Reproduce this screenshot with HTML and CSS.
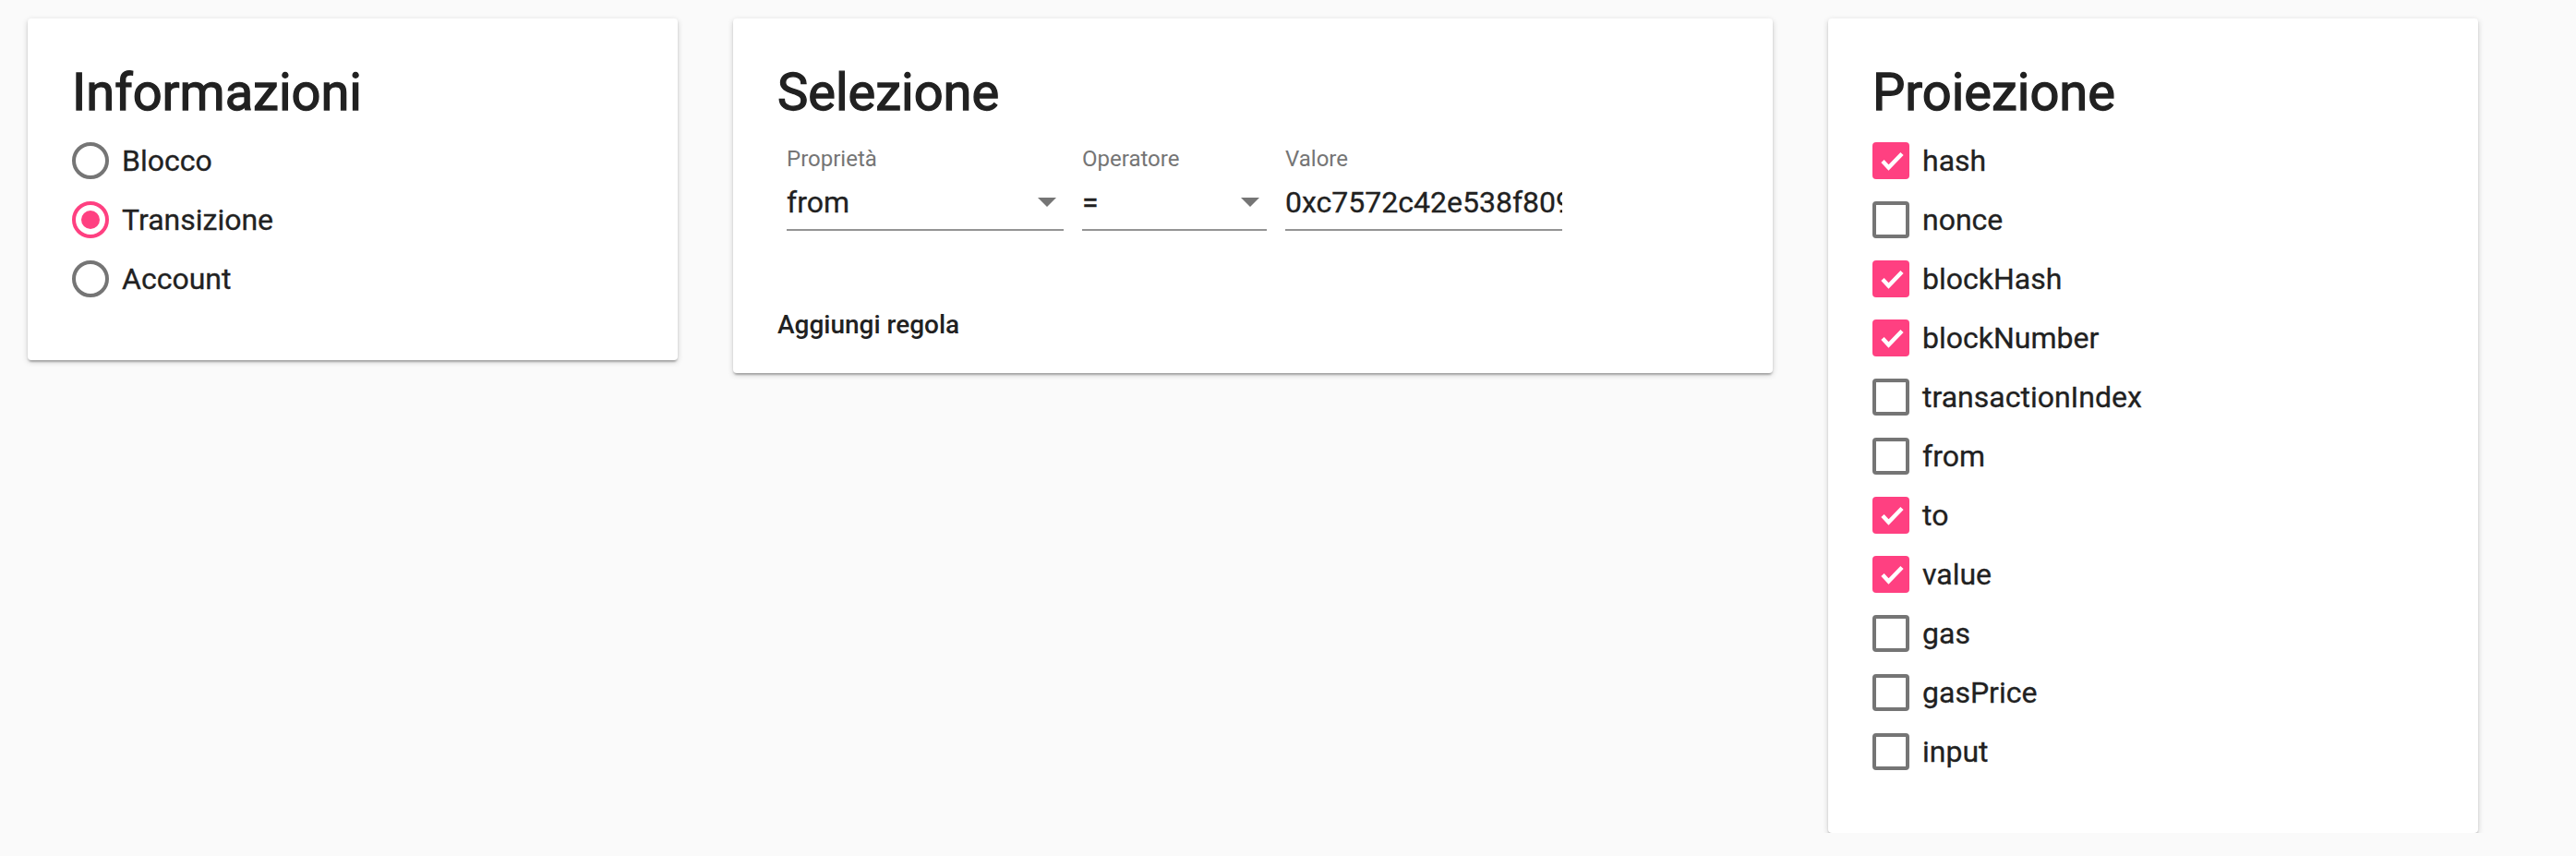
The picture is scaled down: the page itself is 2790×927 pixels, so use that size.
FILE: index.html
```html
<!DOCTYPE html>
<html lang="it">
<head>
<meta charset="utf-8">
<title>Query</title>
<link rel="stylesheet" href="styles.css">
</head>
<body>
<div class="cards">
  <section class="card card-info">
    <h2 class="card-title">Informazioni</h2>
    <ul class="options">
      <li class="option"><span class="radio"></span><span class="option-label">Blocco</span></li>
      <li class="option"><span class="radio radio-checked"><span class="radio-dot"></span></span><span class="option-label">Transizione</span></li>
      <li class="option"><span class="radio"></span><span class="option-label">Account</span></li>
    </ul>
  </section>

  <section class="card card-selection">
    <h2 class="card-title">Selezione</h2>
    <div class="fields">
      <div class="field field-wide">
        <span class="field-label">Proprietà</span>
        <div class="field-input">
          <span class="field-value">from</span>
          <svg class="arrow" viewBox="0 0 20 10" width="20" height="10"><polygon points="0,0 20,0 10,10" fill="#757575"/></svg>
        </div>
      </div>
      <div class="field field-narrow">
        <span class="field-label">Operatore</span>
        <div class="field-input">
          <span class="field-value">=</span>
          <svg class="arrow" viewBox="0 0 20 10" width="20" height="10"><polygon points="0,0 20,0 10,10" fill="#757575"/></svg>
        </div>
      </div>
      <div class="field field-wide">
        <span class="field-label">Valore</span>
        <div class="field-input">
          <span class="field-value field-clip">0xc7572c42e538f8093b52e2a8a3dc7d9fb5bb8b3e</span>
        </div>
      </div>
    </div>
    <div class="add-rule">Aggiungi regola</div>
  </section>

  <section class="card card-projection">
    <h2 class="card-title">Proiezione</h2>
    <ul class="options">
      <li class="option"><span class="checkbox checkbox-checked"><svg viewBox="0 0 40 40" width="40" height="40"><polyline points="11,20.5 17.5,27.5 32,12.5" fill="none" stroke="#fff" stroke-width="4.5"/></svg></span><span class="option-label">hash</span></li>
      <li class="option"><span class="checkbox"></span><span class="option-label">nonce</span></li>
      <li class="option"><span class="checkbox checkbox-checked"><svg viewBox="0 0 40 40" width="40" height="40"><polyline points="11,20.5 17.5,27.5 32,12.5" fill="none" stroke="#fff" stroke-width="4.5"/></svg></span><span class="option-label">blockHash</span></li>
      <li class="option"><span class="checkbox checkbox-checked"><svg viewBox="0 0 40 40" width="40" height="40"><polyline points="11,20.5 17.5,27.5 32,12.5" fill="none" stroke="#fff" stroke-width="4.5"/></svg></span><span class="option-label">blockNumber</span></li>
      <li class="option"><span class="checkbox"></span><span class="option-label">transactionIndex</span></li>
      <li class="option"><span class="checkbox"></span><span class="option-label">from</span></li>
      <li class="option"><span class="checkbox checkbox-checked"><svg viewBox="0 0 40 40" width="40" height="40"><polyline points="11,20.5 17.5,27.5 32,12.5" fill="none" stroke="#fff" stroke-width="4.5"/></svg></span><span class="option-label">to</span></li>
      <li class="option"><span class="checkbox checkbox-checked"><svg viewBox="0 0 40 40" width="40" height="40"><polyline points="11,20.5 17.5,27.5 32,12.5" fill="none" stroke="#fff" stroke-width="4.5"/></svg></span><span class="option-label">value</span></li>
      <li class="option"><span class="checkbox"></span><span class="option-label">gas</span></li>
      <li class="option"><span class="checkbox"></span><span class="option-label">gasPrice</span></li>
      <li class="option"><span class="checkbox"></span><span class="option-label">input</span></li>
    </ul>
  </section>
</div>
</body>
</html>
```

FILE: styles.css
```css
html, body {
  margin: 0;
  padding: 0;
  background: #fafafa;
  font-family: Roboto, "Liberation Sans", Arial, sans-serif;
  color: #212121;
}

.cards {
  display: flex;
  align-items: flex-start;
  gap: 60px;
  padding: 20px 0 0 30px;
}

.card {
  box-sizing: border-box;
  background: #fff;
  border-radius: 4px;
  padding: 48px 48px 56px;
  box-shadow: 0 2px 6px 0 rgba(0, 0, 0, 0.18), 0 2px 2px 0 rgba(0, 0, 0, 0.14), 0 4px 2px -2px rgba(0, 0, 0, 0.12);
}

.card-info,
.card-projection {
  width: 704px;
}

.card-selection {
  width: 1126px;
  padding-bottom: 36px;
}

.card-title {
  margin: 0 0 10px;
  font-size: 56px;
  line-height: 64px;
  font-weight: 400;
  color: #212121;
  -webkit-text-stroke: 1.3px #212121;
}

.options {
  list-style: none;
  margin: 0;
  padding: 0;
}

.option {
  display: flex;
  align-items: center;
  height: 64px;
}

.option-label {
  font-size: 32px;
  line-height: 38px;
  margin-left: 14px;
  color: #212121;
  -webkit-text-stroke: 0.3px #212121;
}

.radio {
  box-sizing: border-box;
  width: 40px;
  height: 40px;
  border: 4px solid #757575;
  border-radius: 50%;
  display: flex;
  align-items: center;
  justify-content: center;
  flex-shrink: 0;
}

.radio-checked {
  border-color: #ff4081;
}

.radio-dot {
  width: 20px;
  height: 20px;
  border-radius: 50%;
  background: #ff4081;
}

.checkbox {
  box-sizing: border-box;
  width: 40px;
  height: 40px;
  border: 4px solid #757575;
  border-radius: 4px;
  flex-shrink: 0;
  display: block;
}

.checkbox-checked {
  border: 0;
  background: #ff4081;
}

.checkbox svg {
  display: block;
}

.fields {
  display: flex;
  margin-top: 28px;
}

.field {
  margin: 0 10px;
  display: flex;
  flex-direction: column;
}

.field-wide {
  width: 300px;
}

.field-narrow {
  width: 200px;
}

.field-label {
  font-size: 24px;
  line-height: 24px;
  color: #757575;
}

.field-input {
  margin-top: 16px;
  display: flex;
  align-items: center;
  height: 38px;
  padding-bottom: 10px;
  border-bottom: 2px solid #949494;
  overflow: hidden;
}

.field-value {
  flex: 1;
  min-width: 0;
  font-size: 32px;
  line-height: 38px;
  color: #212121;
  white-space: nowrap;
  -webkit-text-stroke: 0.3px #212121;
}

.field-clip {
  overflow: hidden;
}

.arrow {
  flex-shrink: 0;
  margin-right: 8px;
  display: block;
}

.add-rule {
  margin-top: 86px;
  font-size: 28px;
  line-height: 32px;
  font-weight: 500;
  color: #212121;
}
```
